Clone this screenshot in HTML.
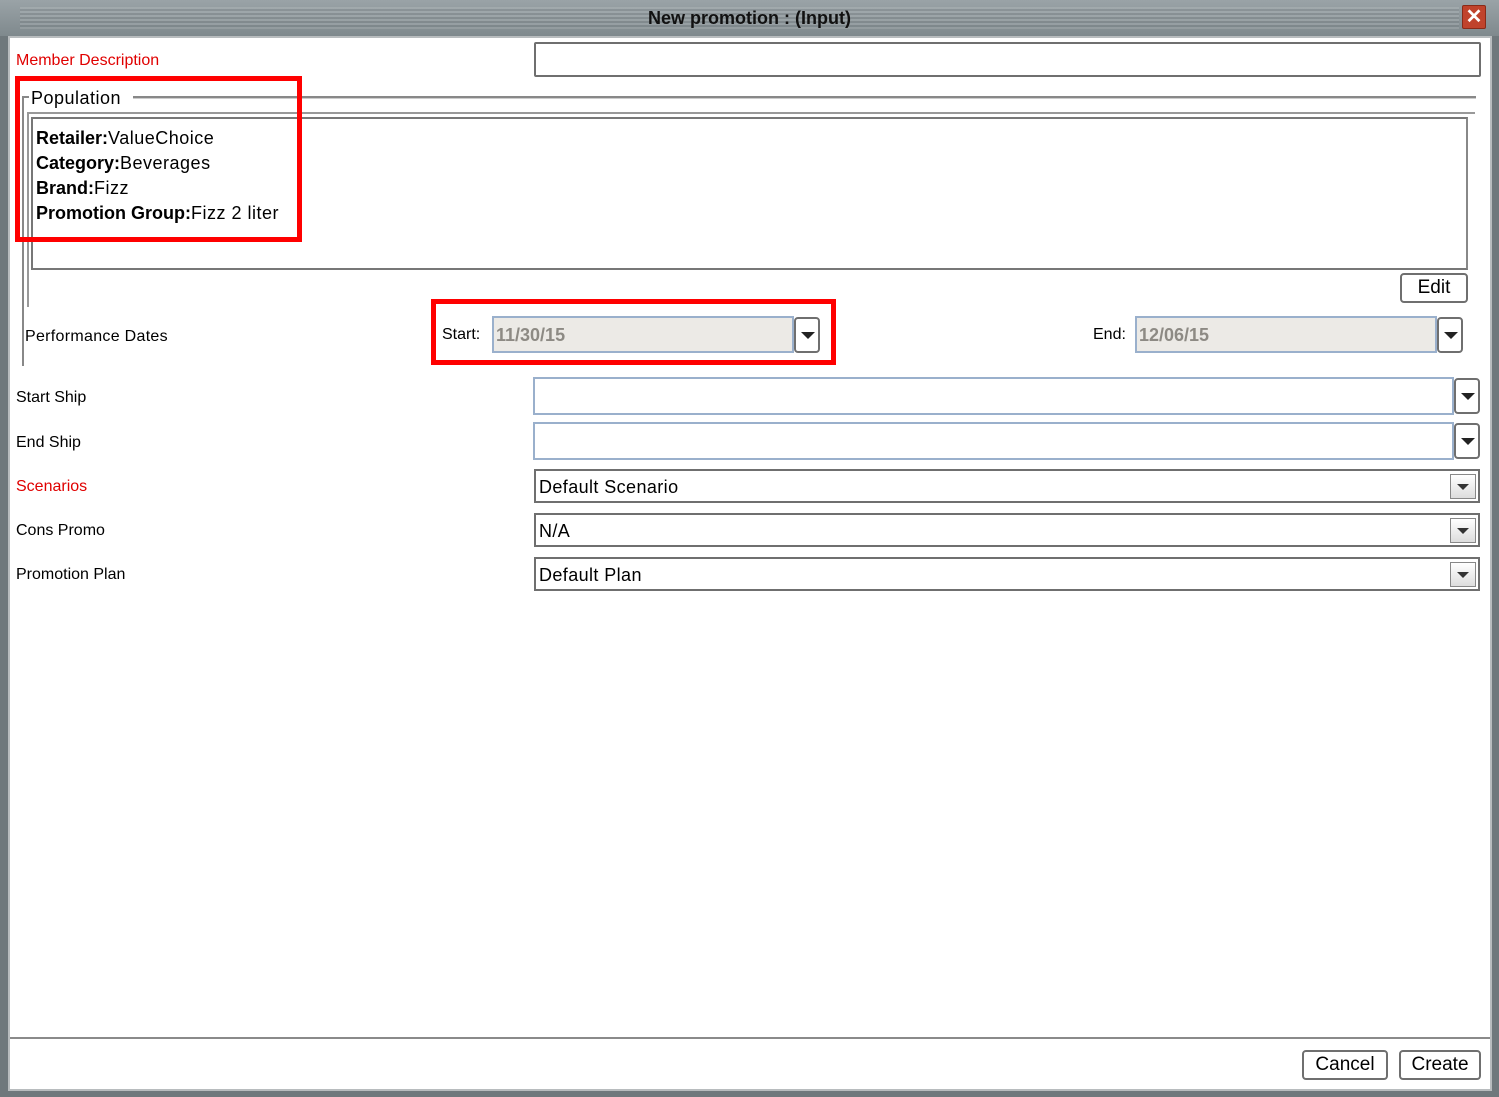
<!DOCTYPE html>
<html><head><meta charset="utf-8"><style>
*{margin:0;padding:0;box-sizing:border-box}
body{width:1499px;height:1097px;background:#6f787c;font-family:"Liberation Sans",sans-serif;position:relative;overflow:hidden;font-size:16px;color:#000}
.a{position:absolute}
#title{left:0;top:0;width:1499px;height:36px;background:linear-gradient(#9aa3a7,#7f898d);}
#title:before{content:"";position:absolute;left:20px;right:40px;top:7px;height:22px;background:repeating-linear-gradient(rgba(255,255,255,.12) 0 2px,rgba(0,0,0,.06) 2px 4px)}
#title span{position:absolute;left:0;right:0;top:8px;text-align:center;font-weight:bold;font-size:18px;color:#111}
#close{left:1462px;top:5px;width:24px;height:24px;background:#c0432c;border:1px solid #8a2a18;border-radius:2px;color:#fff;font-weight:bold;font-size:20px;line-height:22px;text-align:center}
#main{left:8px;top:36px;width:1484px;height:1055px;background:#fff;border:2px solid #b8bcbe}
.lbl{font-size:16px}
.red{color:#e00000}
.tf{border:2px solid #6f6f6f;border-radius:2px;background:#fff}
.bl{border:2px solid #9ab0cc;background:#fff}
.dd{width:26px;height:36px;border:2px solid #6f6f6f;border-radius:4px;background:#fff}
.dd:after{content:"";position:absolute;left:5px;top:13px;border-left:7px solid transparent;border-right:7px solid transparent;border-top:7px solid #222}
.cb{border:2px solid #6f6f6f;background:#fff;height:34px}
.cb .t{position:absolute;left:3px;top:6px;font-size:18px;letter-spacing:.4px}
.cb .b{position:absolute;right:2px;top:3px;width:26px;height:25px;border:1px solid #888;background:linear-gradient(#fff,#ddd)}
.cb .b:after{content:"";position:absolute;left:6px;top:9px;border-left:6px solid transparent;border-right:6px solid transparent;border-top:6px solid #333}
.btn{border:2px solid #6f6f6f;border-radius:4px;background:#fff;text-align:center;font-size:19px}
.rb{border:5px solid #f00}
</style></head><body>
<div id="title" class="a"><span>New promotion : (Input)</span></div>
<div id="close" class="a">✕</div>
<div id="main" class="a"></div>
<div class="a lbl red" style="left:16px;top:52px">Member Description</div>
<div class="a tf" style="left:534px;top:42px;width:947px;height:35px"></div>
<div class="a" style="left:133px;top:96px;width:1343px;height:3px;border-top:2px solid #888;border-bottom:1px solid #ccc"></div>
<div class="a" style="left:22px;top:96px;width:8px;height:270px;border-left:2px solid #888;border-top:2px solid #888"></div>
<div class="a" style="left:27px;top:112px;width:1448px;height:195px;border-left:2px solid #999;border-top:2px solid #999"></div>
<div class="a" style="left:29px;top:88px;font-size:18px;background:#fff;padding:0 2px;letter-spacing:.5px">Population</div>
<div class="a" style="left:31px;top:117px;width:1437px;height:153px;border:2px solid #777;border-right-color:#888"></div>
<div class="a" style="left:36px;top:126px;font-size:18px;line-height:25px;letter-spacing:.5px"><b style="letter-spacing:0">Retailer:</b>ValueChoice<br><b style="letter-spacing:0">Category:</b>Beverages<br><b style="letter-spacing:0">Brand:</b>Fizz<br><b style="letter-spacing:0">Promotion Group:</b>Fizz 2 liter</div>
<div class="a rb" style="left:15px;top:76px;width:287px;height:166px"></div>
<div class="a btn" style="left:1400px;top:273px;width:68px;height:30px;line-height:26px">Edit</div>
<div class="a lbl" style="left:25px;top:328px;letter-spacing:.3px">Performance Dates</div>
<div class="a lbl" style="left:442px;top:326px">Start:</div>
<div class="a bl" style="left:492px;top:316px;width:302px;height:37px;background:#eceae6;color:#8d8a84;font-weight:bold;font-size:18px;padding:7px 2px">11/30/15</div>
<div class="a dd" style="left:794px;top:317px"></div>
<div class="a rb" style="left:431px;top:299px;width:405px;height:66px"></div>
<div class="a lbl" style="left:1093px;top:326px">End:</div>
<div class="a bl" style="left:1135px;top:316px;width:302px;height:37px;background:#eceae6;color:#8d8a84;font-weight:bold;font-size:18px;padding:7px 2px">12/06/15</div>
<div class="a dd" style="left:1437px;top:317px"></div>
<div class="a lbl" style="left:16px;top:389px">Start Ship</div>
<div class="a bl" style="left:533px;top:377px;width:921px;height:38px"></div>
<div class="a dd" style="left:1454px;top:378px"></div>
<div class="a lbl" style="left:16px;top:434px">End Ship</div>
<div class="a bl" style="left:533px;top:422px;width:921px;height:38px"></div>
<div class="a dd" style="left:1454px;top:423px"></div>
<div class="a lbl red" style="left:16px;top:478px">Scenarios</div>
<div class="a cb" style="left:534px;top:469px;width:946px"><span class="t">Default Scenario</span><span class="b"></span></div>
<div class="a lbl" style="left:16px;top:522px">Cons Promo</div>
<div class="a cb" style="left:534px;top:513px;width:946px"><span class="t">N/A</span><span class="b"></span></div>
<div class="a lbl" style="left:16px;top:566px">Promotion Plan</div>
<div class="a cb" style="left:534px;top:557px;width:946px"><span class="t">Default Plan</span><span class="b"></span></div>
<div class="a" style="left:10px;top:1037px;width:1480px;height:2px;background:#8a8a8a"></div>
<div class="a btn" style="left:1302px;top:1050px;width:86px;height:30px;line-height:26px">Cancel</div>
<div class="a btn" style="left:1399px;top:1050px;width:82px;height:30px;line-height:26px">Create</div>
</body></html>
